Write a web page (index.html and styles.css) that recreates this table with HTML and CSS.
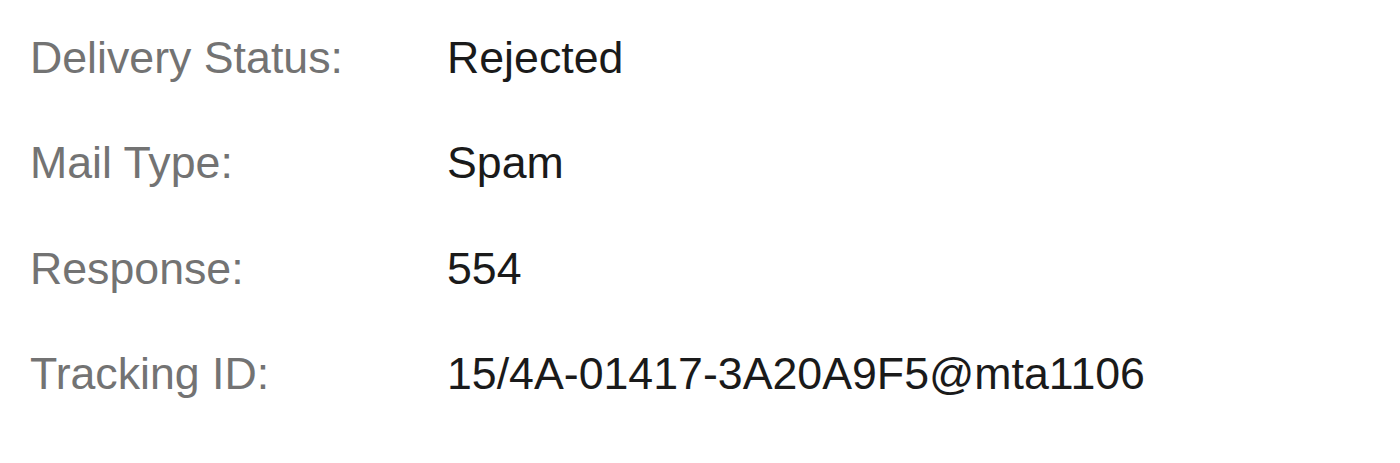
FILE: index.html
```html
<!DOCTYPE html>
<html lang="en">
<head>
    <meta charset="UTF-8">
    <meta name="viewport" content="width=device-width, initial-scale=1.0">
    <title>Delivery details</title>

    <link rel="stylesheet" href="styles.css">

</head>
<body>
    <dl class="detalhes">
        <div class="linha">
            <dt>Delivery Status:</dt>
            <dd>Rejected</dd>
        </div>
        <div class="linha">
            <dt>Mail Type:</dt>
            <dd>Spam</dd>
        </div>
        <div class="linha">
            <dt>Response:</dt>
            <dd>554</dd>
        </div>
        <div class="linha">
            <dt>Tracking ID:</dt>
            <dd>15/4A-01417-3A20A9F5@mta1106</dd>
        </div>
    </dl>
</body>
</html>
```

FILE: styles.css
```css
*{
    margin: 0;
    padding: 0;
    font-family: "Liberation Sans", Arial, Helvetica, sans-serif;
}

body{
    background-color: #fff;
}

.detalhes{
    padding: 5px 0 0 30px;
    font-size: 44.7px;
}

.linha{
    display: grid;
    grid-template-columns: 417px 1fr;
    line-height: 105.4px;
}

dt{
    color: #737373;
}

dd{
    color: #1a1a1a;
}
```
